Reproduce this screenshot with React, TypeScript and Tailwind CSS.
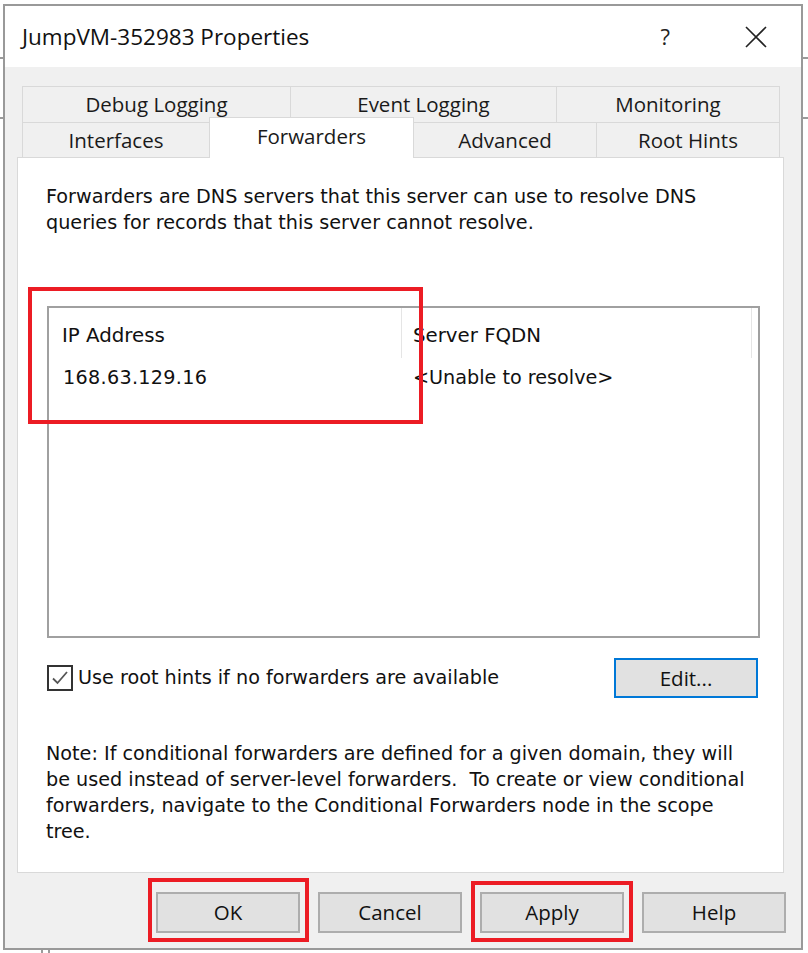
import React from 'react';

const ui = "font-['Open_Sans','Noto_Sans',sans-serif]";
const dlg = "font-['DejaVu_Sans','Liberation_Sans',sans-serif]";

function Tab({ label, className }: { label: string; className: string }) {
  return (
    <div className={`flex items-center justify-center border-[#d9d9d9] text-[20.5px] text-[#1a1a1a] ${className}`}>
      {label}
    </div>
  );
}

function DialogButton({ label }: { label: string }) {
  return (
    <button className="w-[144px] h-[41px] bg-[#e1e1e1] border-2 border-[#adadad] text-[20.5px] text-[#111]">
      {label}
    </button>
  );
}

export default function App() {
  return (
    <div className={`relative w-[808px] h-[953px] bg-white overflow-hidden pt-[4px] pl-[3px] ${ui}`}>
      {/* bits of the window behind */}
      <div className="absolute left-0 top-[57px] w-[3px] h-[2px] bg-[#9a9a9a]" />
      <div className="absolute left-0 top-[117px] w-[3px] h-[2px] bg-[#9a9a9a]" />
      <div className="absolute right-0 top-[57px] w-[6px] h-[2px] bg-[#9a9a9a]" />
      <div className="absolute right-0 top-[117px] w-[6px] h-[2px] bg-[#9a9a9a]" />
      <div className="absolute left-[41px] top-[950px] w-[2px] h-[3px] bg-[#9a9a9a]" />
      <div className="absolute left-[48px] top-[950px] w-[2px] h-[3px] bg-[#9a9a9a]" />

      <div className="w-[800px] h-[946px] border-2 border-[#999] flex flex-col">
        {/* title bar */}
        <div className="h-[61px] bg-white flex items-center pl-[17px] pr-[34px]">
          <span className="text-[22.5px] text-[#111] flex-1">JumpVM-352983 Properties</span>
          <span className="text-[22px] text-[#222] mr-[75px]">?</span>
          <svg width="22" height="22" viewBox="0 0 22 22" className="mt-[1px]">
            <path d="M1 1L21 21M21 1L1 21" stroke="#222" strokeWidth="1.6" />
          </svg>
        </div>

        {/* body */}
        <div className="flex-1 bg-[#f0f0f0] pt-[19px] pl-[12px] pr-[15px] flex flex-col">
          <div className="ml-[5px] w-[758px]">
            <div className="flex h-[36px]">
              <Tab label="Debug Logging" className="w-[268px] border-t border-l" />
              <Tab label="Event Logging" className="w-[266px] border-t border-l" />
              <Tab label="Monitoring" className="w-[224px] border-t border-x" />
            </div>
            <div className="flex h-[35px] items-start">
              <Tab label="Interfaces" className="w-[187px] h-[35px] border-t border-l" />
              <div className="relative z-10 -mt-[5px] w-[205px] h-[41px] bg-white border-t border-x border-[#d9d9d9] flex justify-center pt-[3px] text-[20.5px] text-[#1a1a1a]">
                Forwarders
              </div>
              <Tab label="Advanced" className="w-[182px] h-[35px] border-t" />
              <Tab label="Root Hints" className="w-[184px] h-[35px] border-t border-x" />
            </div>
          </div>

          {/* page */}
          <div className={`w-[767px] h-[716px] bg-white border border-[#d9d9d9] pl-[28px] pt-[26px] text-[19.2px] leading-[26px] text-[#111] ${dlg}`}>
            <p>
              Forwarders are DNS servers that this server can use to resolve DNS
              <br />
              queries for records that this server cannot resolve.
            </p>

            <div className="mt-[70px] ml-[1px] w-[713px] h-[332px] border-2 border-[#a0a0a0]">
              <div className="flex h-[50px]">
                <div className="w-[353px] pl-[13px] pt-[15px] border-r border-[#e5e5e5] text-[19.8px]">IP Address</div>
                <div className="w-[350px] pl-[11px] pt-[15px] border-r border-[#e5e5e5] text-[19.8px]">Server FQDN</div>
              </div>
              <div className="flex h-[28px] mt-[7px]">
                <div className="w-[353px] pl-[14px] tracking-[0.3px]">168.63.129.16</div>
                <div className="pl-[11px]">&lt;Unable to resolve&gt;</div>
              </div>
            </div>

            <div className="flex items-center mt-[20px] ml-[1px] pr-[25px]">
              <div className="w-[26px] h-[26px] border-2 border-[#333] bg-white flex items-center justify-center">
                <svg width="20" height="20" viewBox="0 0 20 20">
                  <path d="M3 10.5L7.5 15L17 4" fill="none" stroke="#555" strokeWidth="1.8" />
                </svg>
              </div>
              <span className="ml-[5px] flex-1">Use root hints if no forwarders are available</span>
              <button className={`w-[144px] h-[40px] bg-[#e1e1e1] border-2 border-[#0078d7] text-[20.5px] text-[#111] ${ui}`}>
                Edit...
              </button>
            </div>

            <p className="mt-[43px]">
              Note: If conditional forwarders are defined for a given domain, they will
              <br />
              be used instead of server-level forwarders.&nbsp; To create or view conditional
              <br />
              forwarders, navigate to the Conditional Forwarders node in the scope
              <br />
              tree.
            </p>
          </div>

          {/* buttons */}
          <div className="flex justify-end gap-[18px] mt-[19px]">
            <DialogButton label="OK" />
            <DialogButton label="Cancel" />
            <DialogButton label="Apply" />
            <DialogButton label="Help" />
          </div>
        </div>
      </div>

      {/* red annotation boxes */}
      <div className="absolute left-[28px] top-[287px] w-[395px] h-[137px] border-4 border-[#ec1c24]" />
      <div className="absolute left-[148px] top-[878px] w-[161px] h-[64px] border-4 border-[#ec1c24]" />
      <div className="absolute left-[471px] top-[881px] w-[162px] h-[61px] border-4 border-[#ec1c24]" />
    </div>
  );
}
